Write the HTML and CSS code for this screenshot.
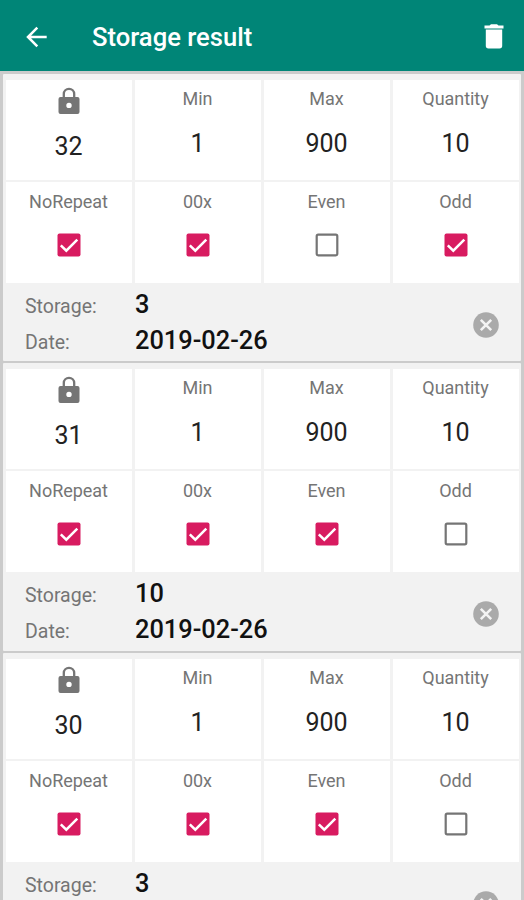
FILE: index.html
```html
<!DOCTYPE html>
<html lang="en">
<head>
<meta charset="utf-8">
<title>Storage result</title>
<link rel="stylesheet" href="styles.css">
</head>
<body>
<svg class="defs" width="0" height="0">
  <symbol id="lock" viewBox="0 0 22 28"><path fill="none" stroke="#757575" stroke-width="2.3" d="M5.800 11V7a5.200 5.200 0 0 1 10.400 0v4"/><path fill="#757575" fill-rule="evenodd" d="M2.500 10h17a2 2 0 0 1 2 2v13a2 2 0 0 1-2 2h-17a2 2 0 0 1-2-2V12a2 2 0 0 1 2-2zm8.500 5.700a2.700 2.700 0 1 0 0 5.400 2.700 2.700 0 0 0 0-5.400z"/></symbol>
  <symbol id="on" viewBox="0 0 24 24"><rect x=".5" y=".5" width="23" height="23" rx="2" fill="#d81b60"/><path d="M3.800 12.300l5.500 5.400L20.300 6.600" fill="none" stroke="#fff" stroke-width="2.500"/></symbol>
  <symbol id="off" viewBox="0 0 24 24"><rect x="1.700" y="1.700" width="20.600" height="20.600" rx="1.500" fill="none" stroke="#757575" stroke-width="2.200"/></symbol>
  <symbol id="close" viewBox="0 0 26 26"><circle cx="13" cy="13" r="12.800" fill="#aaa"/><path d="M7.800 7.800l10.400 10.400M18.200 7.800L7.800 18.200" stroke="#f4f4f4" stroke-width="2.600"/></symbol>
</svg>
<header class="bar">
  <svg class="back" viewBox="0 0 22 22"><path d="M20.700 11H2.500M11.300 1.700L2 11l9.300 9.300" fill="none" stroke="#fff" stroke-width="2.500"/></svg>
  <h1>Storage result</h1>
  <svg class="trash" viewBox="0 0 20 25"><path fill="#fff" d="M.5 1.500h5L7 .2h6l1.500 1.300h5v3H.5zM1.800 5.500h16.400v16.300a2.700 2.700 0 0 1-2.700 2.700h-11a2.700 2.700 0 0 1-2.700-2.700z"/></svg>
</header>
<main class="list">
  <section class="card">
    <div class="grid">
      <div class="cell"><svg class="lock"><use href="#lock"/></svg><b class="low">32</b></div>
      <div class="cell"><span>Min</span><b>1</b></div>
      <div class="cell"><span>Max</span><b>900</b></div>
      <div class="cell"><span>Quantity</span><b>10</b></div>
      <div class="cell"><span>NoRepeat</span><svg class="check"><use href="#on"/></svg></div>
      <div class="cell"><span>00x</span><svg class="check"><use href="#on"/></svg></div>
      <div class="cell"><span>Even</span><svg class="check"><use href="#off"/></svg></div>
      <div class="cell"><span>Odd</span><svg class="check"><use href="#on"/></svg></div>
    </div>
    <footer class="info">
      <dl><dt>Storage:</dt><dd>3</dd><dt>Date:</dt><dd>2019-02-26</dd></dl>
      <svg class="close"><use href="#close"/></svg>
    </footer>
  </section>
  <section class="card">
    <div class="grid">
      <div class="cell"><svg class="lock"><use href="#lock"/></svg><b class="low">31</b></div>
      <div class="cell"><span>Min</span><b>1</b></div>
      <div class="cell"><span>Max</span><b>900</b></div>
      <div class="cell"><span>Quantity</span><b>10</b></div>
      <div class="cell"><span>NoRepeat</span><svg class="check"><use href="#on"/></svg></div>
      <div class="cell"><span>00x</span><svg class="check"><use href="#on"/></svg></div>
      <div class="cell"><span>Even</span><svg class="check"><use href="#on"/></svg></div>
      <div class="cell"><span>Odd</span><svg class="check"><use href="#off"/></svg></div>
    </div>
    <footer class="info">
      <dl><dt>Storage:</dt><dd>10</dd><dt>Date:</dt><dd>2019-02-26</dd></dl>
      <svg class="close"><use href="#close"/></svg>
    </footer>
  </section>
  <section class="card">
    <div class="grid">
      <div class="cell"><svg class="lock"><use href="#lock"/></svg><b class="low">30</b></div>
      <div class="cell"><span>Min</span><b>1</b></div>
      <div class="cell"><span>Max</span><b>900</b></div>
      <div class="cell"><span>Quantity</span><b>10</b></div>
      <div class="cell"><span>NoRepeat</span><svg class="check"><use href="#on"/></svg></div>
      <div class="cell"><span>00x</span><svg class="check"><use href="#on"/></svg></div>
      <div class="cell"><span>Even</span><svg class="check"><use href="#on"/></svg></div>
      <div class="cell"><span>Odd</span><svg class="check"><use href="#off"/></svg></div>
    </div>
    <footer class="info">
      <dl><dt>Storage:</dt><dd>3</dd></dl>
      <svg class="close"><use href="#close"/></svg>
    </footer>
  </section>
</main>
</body>
</html>
```
FILE: styles.css
```css
* { box-sizing: border-box; }
html, body { margin: 0; height: 900px; overflow: hidden; }
body { font-family: Roboto, sans-serif; background: #cbcbcb; display: flex; flex-direction: column; }
.defs { display: none; }
.bar { flex: none; height: 71px; background: #008577; display: flex; align-items: center; padding: 2px 20px 0 26px; }
.back { width: 22px; height: 22px; margin-right: 44px; }
.bar h1 { margin: 0; flex: 1; color: #fff; font-size: 25.6px; font-weight: 500; line-height: 32px; white-space: nowrap; }
.trash { width: 20px; height: 25px; }
.list { flex: none; padding: 3px 3px 0; }
.card { height: 287.4px; margin-bottom: 2px; padding: 6px 2px 0 3px; background: #f2f2f2; border-radius: 1px; }
.grid { display: grid; grid-template-columns: repeat(4, 1fr); grid-template-rows: 100px 101px; column-gap: 3px; row-gap: 2px; }
.cell { background: #fff; display: flex; flex-direction: column; align-items: center; padding-right: 1px; }
.cell span { margin-top: 9px; font-size: 18px; line-height: 21px; color: #757575; letter-spacing: -.04px; }
.cell:nth-child(-n+4) span { margin-top: 8px; }
.cell b { margin-top: 20px; font-size: 25px; line-height: 30px; font-weight: 400; color: #222; }
.cell .low { margin-top: 17px; }
.lock { width: 22px; height: 28px; margin-top: 7px; }
.check { width: 24px; height: 24px; margin-top: 21px; }
.info { height: 77px; display: flex; justify-content: space-between; padding: 4px 20px 0 19px; }
.info dl { margin: 0; display: grid; grid-template-columns: 110px auto; grid-auto-rows: 36px; align-items: center; }
.info dt { font-size: 19.5px; color: #757575; padding-top: 3px; }
.info dd { margin: 0; padding-bottom: 2px; font-size: 25.4px; font-weight: 500; color: #111; }
.close { width: 26px; height: 26px; margin-top: 25px; }
```
